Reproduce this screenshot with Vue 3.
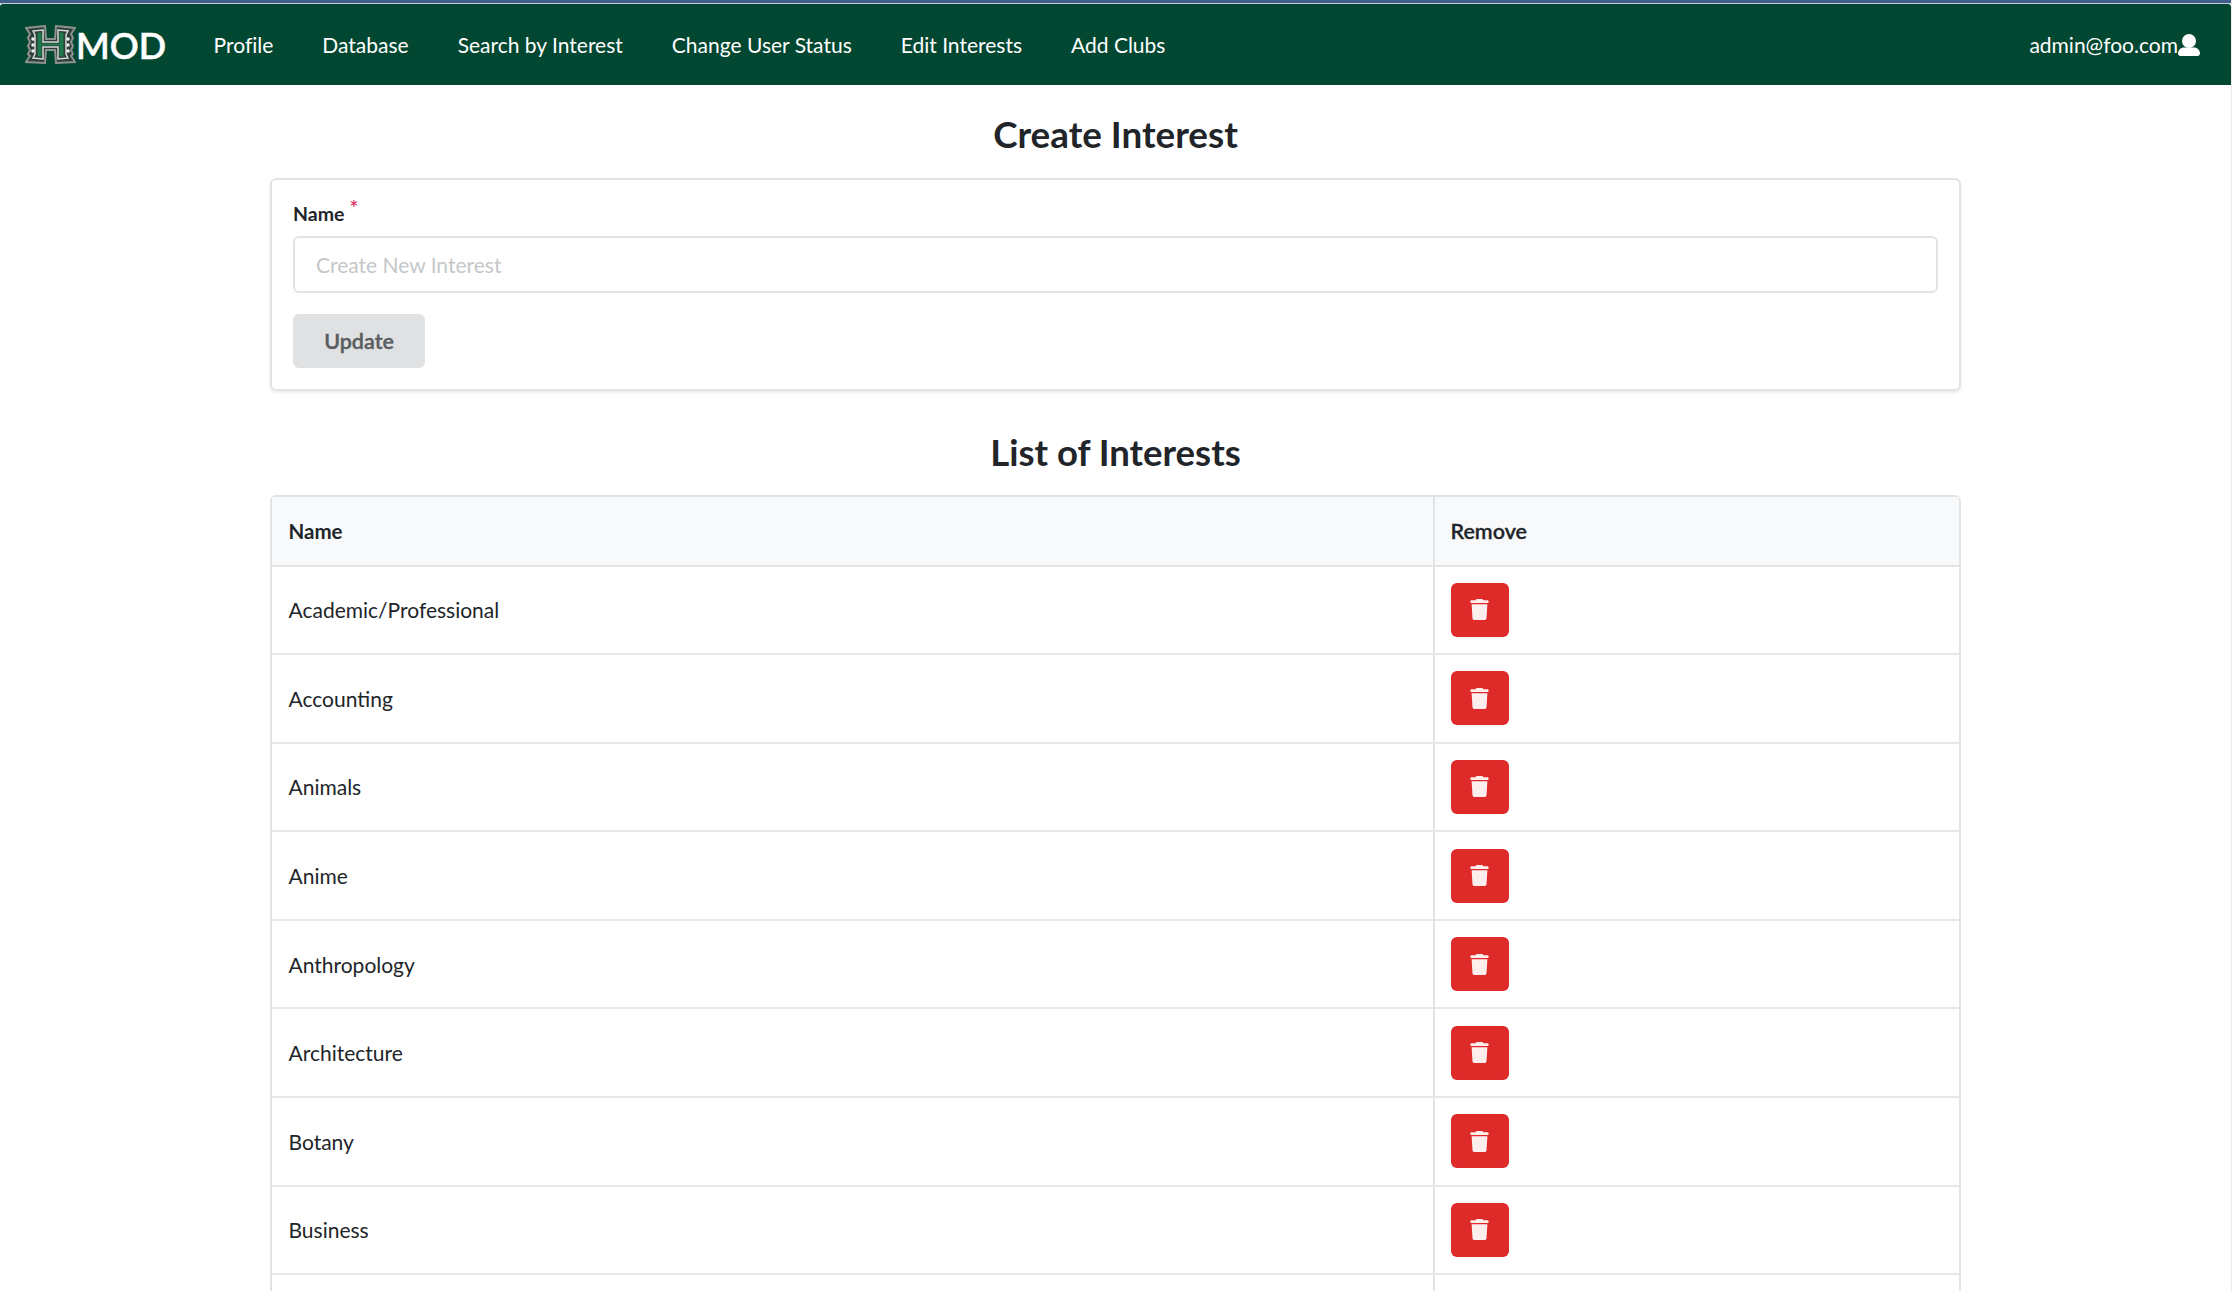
<template>
  <div class="page">
    <div class="strip"></div>
    <nav class="navbar">
      <a class="brand">
        <svg class="logo" viewBox="0 0 51 39" width="51" height="39">
          <path d="M1 3 L20 1 L21 14 L30 14 L31 1 L50 3 L46 9 L48 13 L46 17 L48 21 L46 25 L48 29 L46 31 L50 37 L31 38 L30 25 L21 25 L20 38 L1 37 L5 31 L3 29 L5 25 L3 21 L5 17 L3 13 L5 9 Z" fill="#2d3f38" stroke="#8d9190" stroke-width="2" />
          <path d="M8 6 L18 5 L18 17 L33 17 L33 5 L43 6 L41 10 L41 29 L43 33 L33 34 L33 22 L18 22 L18 34 L8 33 L10 29 L10 10 Z" fill="none" stroke="#d5d8d6" stroke-width="1.500" />
          <path d="M13 8 L16 8 L16 19 L35 19 L35 8 L38 8 L38 31 L35 31 L35 20 L16 20 L16 31 L13 31 Z" fill="#1c7a4c" stroke="#1c7a4c" stroke-width="1" />
          <g fill="#eceeed">
            <circle cx="8" cy="14" r="1.800" />
            <circle cx="8" cy="20" r="1.800" />
            <circle cx="8" cy="26" r="1.800" />
            <circle cx="43" cy="14" r="1.800" />
            <circle cx="43" cy="20" r="1.800" />
            <circle cx="43" cy="26" r="1.800" />
          </g>
        </svg>
        <span>MOD</span>
      </a>
      <ul class="links">
        <li v-for="link in links" :key="link">{{ link }}</li>
      </ul>
      <div class="user">
        <span>admin@foo.com</span>
        <svg viewBox="0 0 22 22" width="22" height="22" fill="#fff">
          <circle cx="11" cy="7" r="7" />
          <path d="M6 13.500h10c3.300 0 6 2.700 6 6 0 1.400-1.100 2.500-2.500 2.500h-17C1.100 22 0 20.900 0 19.500c0-3.300 2.700-6 6-6z" />
        </svg>
      </div>
    </nav>

    <main class="content">
      <h1>Create Interest</h1>
      <section class="card">
        <label class="label">Name <sup>*</sup></label>
        <input class="input" type="text" placeholder="Create New Interest" />
        <button class="update">Update</button>
      </section>

      <h1 class="list-title">List of Interests</h1>
      <table class="table">
        <thead>
          <tr>
            <th class="col-name">Name</th>
            <th class="col-remove">Remove</th>
          </tr>
        </thead>
        <tbody>
          <tr v-for="item in interests" :key="item">
            <td>{{ item }}</td>
            <td>
              <button class="remove">
                <svg viewBox="0 0 448 512" width="19" height="21" fill="#fdeeee">
                  <path d="M135.200 17.700L128 32H32C14.300 32 0 46.300 0 64S14.300 96 32 96H416c17.700 0 32-14.300 32-32s-14.300-32-32-32H320l-7.200-14.300C307.400 6.800 296.300 0 284.200 0H163.800c-12.100 0-23.200 6.800-28.600 17.700zM416 128H32L53.200 467c1.600 25.300 22.600 45 47.900 45H346.900c25.300 0 46.300-19.700 47.900-45L416 128z" />
                </svg>
              </button>
            </td>
          </tr>
          <tr>
            <td></td>
            <td></td>
          </tr>
        </tbody>
      </table>
    </main>
  </div>
</template>

<script setup>
const links = ['Profile', 'Database', 'Search by Interest', 'Change User Status', 'Edit Interests', 'Add Clubs'];

const interests = [
  'Academic/Professional',
  'Accounting',
  'Animals',
  'Anime',
  'Anthropology',
  'Architecture',
  'Botany',
  'Business',
];
</script>

<style>
html, body {
  margin: 0;
  background: #fff;
  overflow: hidden;
  height: 1291px;
}
</style>

<style scoped>
.page {
  box-sizing: border-box;
  font-family: Lato, "Open Sans", sans-serif;
  color: #212529;
  height: 1291px;
  overflow: hidden;
  border-right: 1px solid #ececec;
}

.strip {
  box-sizing: border-box;
  height: 4px;
  background: #3f5f8a;
  border-bottom: 1px solid #c3ccd8;
}

.navbar {
  display: flex;
  align-items: center;
  height: 81px;
  background: #024731;
  border-radius: 3px 3px 0 0;
  color: #fff;
  padding: 0 31px 0 25px;
}

.brand {
  display: flex;
  align-items: center;
  font-size: 36px;
  font-weight: 600;
  -webkit-text-stroke: 0.5px #fff;
}

.links {
  display: flex;
  gap: 49px;
  list-style: none;
  margin: 0 0 0 47.5px;
  padding: 0;
  font-size: 21px;
  font-variant-ligatures: none;
}

.user {
  margin-left: auto;
  display: flex;
  align-items: center;
  font-size: 21px;
}

.content {
  width: 1691px;
  margin: 0 auto;
}

h1 {
  margin: 0;
  padding-top: 27px;
  height: 93px;
  box-sizing: border-box;
  font-size: 36.800px;
  line-height: 44px;
  font-weight: 700;
  text-align: center;
  color: #212529;
}

.card {
  box-sizing: border-box;
  height: 213px;
  padding: 21px 21px;
  border: 2px solid #e2e3e5;
  border-radius: 6px;
  box-shadow: 0 2px 3px rgba(0, 0, 0, 0.08);
  display: flex;
  flex-direction: column;
  align-items: flex-start;
}

.label {
  font-size: 19.500px;
  font-weight: 700;
  line-height: 26px;
  margin-bottom: 9px;
}

.label sup {
  color: #e0245e;
  font-size: 22px;
  font-weight: 400;
  line-height: 0;
  vertical-align: 5px;
}

.input {
  box-sizing: border-box;
  width: 100%;
  height: 57px;
  padding: 0 21px;
  border: 2px solid #e2e3e5;
  border-radius: 6px;
  font-family: inherit;
  font-size: 21px;
  outline: none;
}

.input::placeholder {
  color: #c4c7ca;
}

.update {
  margin-top: 21px;
  width: 132px;
  height: 54px;
  border: none;
  border-radius: 6px;
  background: #e0e1e3;
  color: #5a5d60;
  font-family: inherit;
  font-size: 21.500px;
  font-weight: 600;
  -webkit-text-stroke: 0.4px #5a5d60;
}

.list-title {
  height: 104px;
  padding-top: 38.500px;
  font-size: 36.500px;
}

.table {
  width: 100%;
  border-collapse: separate;
  border-spacing: 0;
  border: 2px solid #e2e3e5;
  border-radius: 6px;
  font-size: 21px;
  table-layout: fixed;
}

th {
  height: 67.500px;
  padding: 0 16px 0 16.500px;
  background: #f8f9fa;
  border-bottom: 2px solid #e2e3e5;
  text-align: left;
  font-size: 20.500px;
  font-weight: 700;
}

.col-remove {
  padding-left: 16px;
  font-size: 21.500px;
  font-weight: 600;
  -webkit-text-stroke: 0.3px #212529;
}

td {
  height: 86.600px;
  padding: 0 16px 0 16.500px;
  border-bottom: 2px solid #e6e7e9;
}

td:last-child {
  padding-left: 16px;
}

.col-name {
  width: 1128px;
}

th:first-child,
td:first-child {
  border-right: 2px solid #e2e3e5;
}

.remove {
  display: flex;
  align-items: center;
  justify-content: center;
  width: 58px;
  height: 54px;
  border: none;
  border-radius: 6px;
  background: #df2a2a;
  padding: 0;
}
</style>
